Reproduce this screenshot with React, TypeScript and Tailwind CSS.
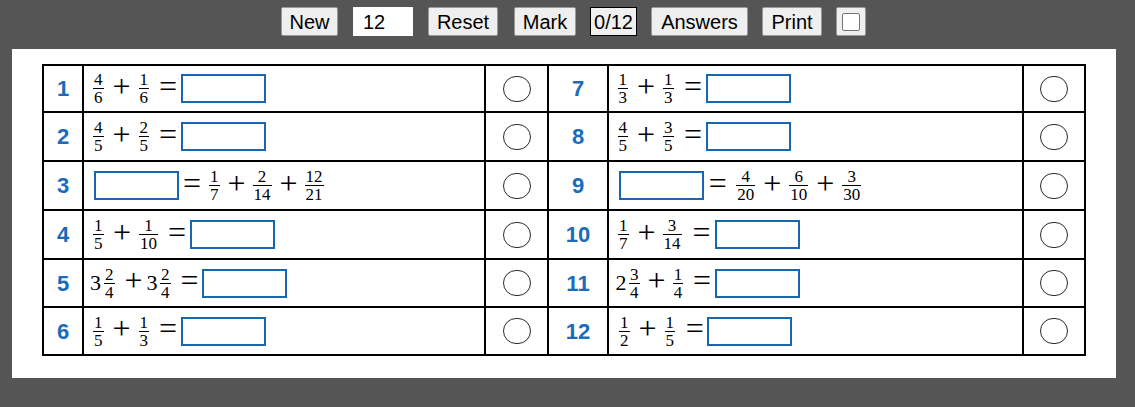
import React from "react";

type Tok =
  | { k: "f"; n: string; d: string; m: string }
  | { k: "p"; m: string }
  | { k: "e"; m: string }
  | { k: "b"; m: string }
  | { k: "i"; v: string; m: string };

type Row = { num: string; toks: Tok[] };

const left: Row[] = [
  { num: "1", toks: [ { k: "f", n: "4", d: "6", m: "ml-[9px]" }, { k: "p", m: "ml-[10px]" }, { k: "f", n: "1", d: "6", m: "ml-[9px]" }, { k: "e", m: "ml-[11px]" }, { k: "b", m: "ml-[5px]" } ] },
  { num: "2", toks: [ { k: "f", n: "4", d: "5", m: "ml-[9px]" }, { k: "p", m: "ml-[10px]" }, { k: "f", n: "2", d: "5", m: "ml-[9px]" }, { k: "e", m: "ml-[11px]" }, { k: "b", m: "ml-[5px]" } ] },
  { num: "3", toks: [ { k: "b", m: "ml-[10px]" }, { k: "e", m: "ml-[5px]" }, { k: "f", n: "1", d: "7", m: "ml-[9px]" }, { k: "p", m: "ml-[9px]" }, { k: "f", n: "2", d: "14", m: "ml-[8px]" }, { k: "p", m: "ml-[9px]" }, { k: "f", n: "12", d: "21", m: "ml-[8px]" } ] },
  { num: "4", toks: [ { k: "f", n: "1", d: "5", m: "ml-[9px]" }, { k: "p", m: "ml-[10.5px]" }, { k: "f", n: "1", d: "10", m: "ml-[9px]" }, { k: "e", m: "ml-[11px]" }, { k: "b", m: "ml-[5px]" } ] },
  { num: "5", toks: [ { k: "i", v: "3", m: "ml-[6px]" }, { k: "f", n: "2", d: "4", m: "ml-[3px]" }, { k: "p", m: "ml-[11px]" }, { k: "i", v: "3", m: "ml-[5px]" }, { k: "f", n: "2", d: "4", m: "ml-[2.5px]" }, { k: "e", m: "ml-[11px]" }, { k: "b", m: "ml-[4px]" } ] },
  { num: "6", toks: [ { k: "f", n: "1", d: "5", m: "ml-[9px]" }, { k: "p", m: "ml-[10px]" }, { k: "f", n: "1", d: "3", m: "ml-[9px]" }, { k: "e", m: "ml-[11px]" }, { k: "b", m: "ml-[5px]" } ] },
];

const right: Row[] = [
  { num: "7", toks: [ { k: "f", n: "1", d: "3", m: "ml-[8.5px]" }, { k: "p", m: "ml-[10px]" }, { k: "f", n: "1", d: "3", m: "ml-[9px]" }, { k: "e", m: "ml-[11.5px]" }, { k: "b", m: "ml-[4.6px]" } ] },
  { num: "8", toks: [ { k: "f", n: "4", d: "5", m: "ml-[8.5px]" }, { k: "p", m: "ml-[10px]" }, { k: "f", n: "3", d: "5", m: "ml-[9px]" }, { k: "e", m: "ml-[11.5px]" }, { k: "b", m: "ml-[4.6px]" } ] },
  { num: "9", toks: [ { k: "b", m: "ml-[10px]" }, { k: "e", m: "ml-[5.7px]" }, { k: "f", n: "4", d: "20", m: "ml-[10.5px]" }, { k: "p", m: "ml-[9px]" }, { k: "f", n: "6", d: "10", m: "ml-[9px]" }, { k: "p", m: "ml-[9px]" }, { k: "f", n: "3", d: "30", m: "ml-[9px]" } ] },
  { num: "10", toks: [ { k: "f", n: "1", d: "7", m: "ml-[9px]" }, { k: "p", m: "ml-[10px]" }, { k: "f", n: "3", d: "14", m: "ml-[8px]" }, { k: "e", m: "ml-[12px]" }, { k: "b", m: "ml-[5px]" } ] },
  { num: "11", toks: [ { k: "i", v: "2", m: "ml-[6.5px]" }, { k: "f", n: "3", d: "4", m: "ml-[2.5px]" }, { k: "p", m: "ml-[9px]" }, { k: "f", n: "1", d: "4", m: "ml-[8.3px]" }, { k: "e", m: "ml-[10.6px]" }, { k: "b", m: "ml-[5.4px]" } ] },
  { num: "12", toks: [ { k: "f", n: "1", d: "2", m: "ml-[10px]" }, { k: "p", m: "ml-[10px]" }, { k: "f", n: "1", d: "5", m: "ml-[9px]" }, { k: "e", m: "ml-[11.7px]" }, { k: "b", m: "ml-[4.6px]" } ] },
];

function Token({ t }: { t: Tok }) {
  if (t.k === "f") {
    return (
      <span className={`${t.m} flex flex-col font-['Liberation_Serif',serif] text-[17px] text-black`}>
        <span className="px-[1px] pb-[1px] text-center leading-[15px]">{t.n}</span>
        <span className="h-px bg-black" />
        <span className="px-[1px] pt-[1px] text-center leading-[15px]">{t.d}</span>
      </span>
    );
  }
  if (t.k === "p" || t.k === "e") {
    return (
      <span className={`${t.m} mb-[6px] flex w-[16px] justify-center font-['Liberation_Serif',serif] text-[32px] leading-none text-black`}>
        {t.k === "p" ? "+" : "="}
      </span>
    );
  }
  if (t.k === "i") {
    return (
      <span className={`${t.m} font-['Liberation_Serif',serif] text-[22px] leading-none text-black`}>{t.v}</span>
    );
  }
  return <span className={`${t.m} h-[29px] w-[85px] border-2 border-[#1766ae] bg-white`} />;
}

function Num({ v }: { v: string }) {
  return (
    <div className="flex items-center justify-center bg-white font-['Liberation_Sans',Arial,sans-serif] text-[22px] font-bold text-[#1a6bbb]">
      {v}
    </div>
  );
}

function Expr({ toks }: { toks: Tok[] }) {
  return (
    <div className="flex items-center bg-white">
      {toks.map((t, i) => (
        <Token key={i} t={t} />
      ))}
    </div>
  );
}

function Mark() {
  return (
    <div className="flex items-center justify-center bg-white">
      <span className="h-[26px] w-[28px] rounded-full border border-[#2a2a2a]" />
    </div>
  );
}

const btn =
  "flex h-[29px] items-center justify-center rounded-[2px] border border-[#9a9a9a] bg-[#efefef] text-[20px] text-black";

export default function App() {
  return (
    <div className="h-[407px] w-full bg-[#555555] font-['Liberation_Sans',Arial,sans-serif]">
      <div className="flex h-[49px] items-start justify-center pl-[12px] pt-[7px]">
        <div className={`${btn} w-[57px]`}>New</div>
        <div className="ml-[15px] flex h-[29px] w-[60px] items-center bg-white pl-[10px] text-[20px] text-black">12</div>
        <div className={`${btn} ml-[15px] w-[70px]`}>Reset</div>
        <div className={`${btn} ml-[16px] w-[62px]`}>Mark</div>
        <div className="ml-[14px] flex h-[29px] w-[47px] items-center justify-center border border-black bg-[#f0f0f0] text-[20px] text-black">0/12</div>
        <div className={`${btn} ml-[14px] w-[97px]`}>Answers</div>
        <div className={`${btn} ml-[14px] w-[60px]`}>Print</div>
        <div className={`${btn} ml-[14px] w-[30px]`}>
          <span className="h-[18px] w-[18px] rounded-[2px] border border-[#767676] bg-white" />
        </div>
      </div>
      <div className="ml-[12px] h-[329px] w-[1104px] bg-white pl-[30px] pt-[15px]">
        <div className="grid w-[1044px] grid-cols-[38px_400px_61px_58px_413px_60px] grid-rows-[45px_47px_47px_47px_46px_46px] gap-[2px] bg-black p-[2px]">
          {left.map((r, i) => (
            <React.Fragment key={i}>
              <Num v={r.num} />
              <Expr toks={r.toks} />
              <Mark />
              <Num v={right[i].num} />
              <Expr toks={right[i].toks} />
              <Mark />
            </React.Fragment>
          ))}
        </div>
      </div>
    </div>
  );
}
